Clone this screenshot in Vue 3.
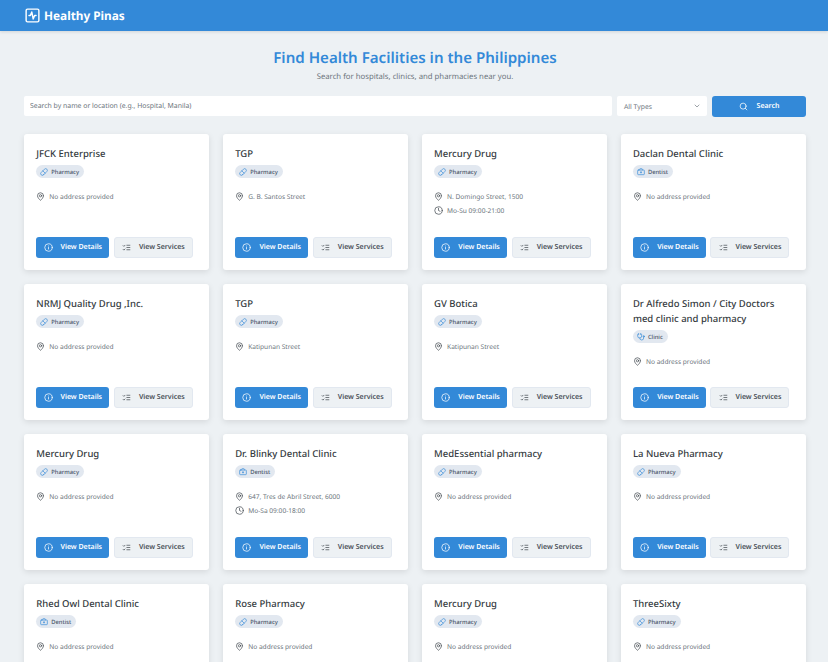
<script setup>
import { ref } from 'vue'

const facilities = ref([
  { name: 'JFCK Enterprise', type: 'Pharmacy', address: 'No address provided' },
  { name: 'TGP', type: 'Pharmacy', address: 'G. B. Santos Street' },
  { name: 'Mercury Drug', type: 'Pharmacy', address: 'N. Domingo Street, 1500', hours: 'Mo-Su 09:00-21:00' },
  { name: 'Daclan Dental Clinic', type: 'Dentist', address: 'No address provided' },
  { name: 'NRMJ Quality Drug ,Inc.', type: 'Pharmacy', address: 'No address provided' },
  { name: 'TGP', type: 'Pharmacy', address: 'Katipunan Street' },
  { name: 'GV Botica', type: 'Pharmacy', address: 'Katipunan Street' },
  { name: 'Dr Alfredo Simon / City Doctors med clinic and pharmacy', type: 'Clinic', address: 'No address provided' },
  { name: 'Mercury Drug', type: 'Pharmacy', address: 'No address provided' },
  { name: 'Dr. Blinky Dental Clinic', type: 'Dentist', address: '647, Tres de Abril Street, 6000', hours: 'Mo-Sa 09:00-18:00' },
  { name: 'MedEssential pharmacy', type: 'Pharmacy', address: 'No address provided' },
  { name: 'La Nueva Pharmacy', type: 'Pharmacy', address: 'No address provided' },
  { name: 'Rhed Owl Dental Clinic', type: 'Dentist', address: 'No address provided' },
  { name: 'Rose Pharmacy', type: 'Pharmacy', address: 'No address provided' },
  { name: 'Mercury Drug', type: 'Pharmacy', address: 'No address provided' },
  { name: 'ThreeSixty', type: 'Pharmacy', address: 'No address provided' }
])
</script>

<template>
  <div class="page">
    <header class="navbar">
      <svg class="logo" viewBox="0 0 24 24" fill="none" stroke="currentColor" stroke-width="2" stroke-linecap="round" stroke-linejoin="round">
        <rect x="3" y="3" width="18" height="18" rx="2" />
        <path d="M17 12h-2l-2 5-2-10-2 5H7" />
      </svg>
      <span class="brand">Healthy Pinas</span>
    </header>

    <main class="content">
      <h1>Find Health Facilities in the Philippines</h1>
      <p class="lead">Search for hospitals, clinics, and pharmacies near you.</p>

      <div class="search-row">
        <input class="search-input" type="text" placeholder="Search by name or location (e.g., Hospital, Manila)" />
        <div class="type-select">
          <span>All Types</span>
          <svg viewBox="0 0 24 24" fill="none" stroke="currentColor" stroke-width="2" stroke-linecap="round" stroke-linejoin="round">
            <path d="m6 9 6 6 6-6" />
          </svg>
        </div>
        <button class="search-btn">
          <svg viewBox="0 0 24 24" fill="none" stroke="currentColor" stroke-width="2" stroke-linecap="round" stroke-linejoin="round">
            <circle cx="11" cy="11" r="8" />
            <path d="m21 21-4.3-4.3" />
          </svg>
          Search
        </button>
      </div>

      <div class="grid">
        <article v-for="(f, i) in facilities" :key="i" class="card">
          <h2>{{ f.name }}</h2>
          <span class="badge">
            <svg v-if="f.type === 'Pharmacy'" viewBox="0 0 24 24" fill="none" stroke="currentColor" stroke-width="2" stroke-linecap="round" stroke-linejoin="round">
              <path d="m10.5 20.5 10-10a4.95 4.95 0 1 0-7-7l-10 10a4.95 4.95 0 1 0 7 7Z" />
              <path d="m8.5 8.5 7 7" />
            </svg>
            <svg v-else-if="f.type === 'Dentist'" viewBox="0 0 24 24" fill="none" stroke="currentColor" stroke-width="2" stroke-linecap="round" stroke-linejoin="round">
              <path d="M12 11v4M10 13h4" />
              <path d="M16 6V4a2 2 0 0 0-2-2h-4a2 2 0 0 0-2 2v2" />
              <rect x="2" y="6" width="20" height="14" rx="2" />
            </svg>
            <svg v-else viewBox="0 0 24 24" fill="none" stroke="currentColor" stroke-width="2" stroke-linecap="round" stroke-linejoin="round">
              <path d="M11 2v2M5 2v2M5 3H4a2 2 0 0 0-2 2v4a6 6 0 0 0 12 0V5a2 2 0 0 0-2-2h-1" />
              <path d="M8 15a6 6 0 0 0 12 0v-3" />
              <circle cx="20" cy="10" r="2" />
            </svg>
            {{ f.type }}
          </span>

          <div class="info">
            <div class="info-line">
              <svg viewBox="0 0 24 24" fill="none" stroke="currentColor" stroke-width="2" stroke-linecap="round" stroke-linejoin="round">
                <path d="M20 10c0 5-5.5 10.2-7.4 11.800a1 1 0 0 1-1.200 0C9.500 20.200 4 15 4 10a8 8 0 0 1 16 0" />
                <circle cx="12" cy="10" r="3" />
              </svg>
              {{ f.address }}
            </div>
            <div v-if="f.hours" class="info-line">
              <svg viewBox="0 0 24 24" fill="none" stroke="currentColor" stroke-width="2" stroke-linecap="round" stroke-linejoin="round">
                <circle cx="12" cy="12" r="10" />
                <path d="M12 6v6l4 2" />
              </svg>
              {{ f.hours }}
            </div>
          </div>

          <div class="actions">
            <button class="btn primary">
              <svg viewBox="0 0 24 24" fill="none" stroke="currentColor" stroke-width="2" stroke-linecap="round" stroke-linejoin="round">
                <circle cx="12" cy="12" r="10" />
                <path d="M12 16v-4M12 8h.01" />
              </svg>
              View Details
            </button>
            <button class="btn secondary">
              <svg viewBox="0 0 24 24" fill="none" stroke="currentColor" stroke-width="2" stroke-linecap="round" stroke-linejoin="round">
                <path d="m3 7 2 2 3-3M3 17l2 2 3-3M13 6h8M13 12h8M13 18h8" />
              </svg>
              View Services
            </button>
          </div>
        </article>
      </div>
    </main>
  </div>
</template>

<style>
html, body {
  margin: 0;
  height: 662px;
  overflow: hidden;
  background: #edf1f4;
}
</style>

<style scoped>
.page {
  font-family: "Noto Sans", "Open Sans", sans-serif;
  color: #343a40;
  text-rendering: geometricPrecision;
}
.navbar {
  height: 31px;
  box-sizing: border-box;
  padding: 0 23.500px;
  display: flex;
  align-items: center;
  gap: 3.500px;
  background: #3389d8;
  color: #fff;
  box-shadow: 0 1px 3px rgba(0, 0, 0, 0.12);
}
.logo {
  width: 17px;
  height: 17px;
}
.brand {
  font-size: 11.800px;
  font-weight: 700;
}
.content {
  padding: 19px 22px 0 24px;
}
h1 {
  margin: 0;
  text-align: center;
  font-size: 15.100px;
  line-height: 16px;
  font-weight: 600;
  color: #3389d8;
}
.lead {
  margin: 5px 0 0;
  text-align: center;
  font-size: 7.750px;
  line-height: 12px;
  color: #6c757d;
}
.search-row {
  display: flex;
  gap: 5px;
  margin-top: 13px;
}
.search-input {
  flex: 1;
  min-width: 0;
  height: 20px;
  box-sizing: border-box;
  padding: 0 6px;
  border: none;
  border-radius: 2px;
  background: #fff;
  font: 6.900px "Noto Sans", sans-serif;
  text-rendering: geometricPrecision;
  outline: none;
}
.search-input::placeholder {
  color: #6c757d;
}
.type-select {
  width: 90px;
  height: 20px;
  box-sizing: border-box;
  padding: 0 6px 0 7px;
  display: flex;
  align-items: center;
  justify-content: space-between;
  background: #fff;
  border-radius: 2px;
  font-size: 6.800px;
  color: #6c757d;
}
.type-select svg {
  width: 8px;
  height: 8px;
}
.search-btn {
  width: 94px;
  height: 21px;
  display: flex;
  align-items: center;
  justify-content: center;
  gap: 9px;
  border: none;
  border-radius: 3px;
  background: #3389d8;
  color: #fff;
  font: 600 7px "Noto Sans", sans-serif;
  text-rendering: geometricPrecision;
}
.search-btn svg {
  width: 9px;
  height: 9px;
}
.grid {
  display: grid;
  grid-template-columns: repeat(4, 1fr);
  column-gap: 13.500px;
  row-gap: 14px;
  margin-top: 17px;
}
.card {
  box-sizing: border-box;
  min-height: 136px;
  padding: 12px 12px 12px 12.300px;
  display: flex;
  flex-direction: column;
  align-items: flex-start;
  background: #fff;
  border-radius: 3px;
  box-shadow: 0 2px 6px rgba(0, 0, 0, 0.1);
}
h2 {
  margin: 0;
  font-size: 9.500px;
  line-height: 15px;
  font-weight: 500;
  color: #343a40;
}
.badge {
  margin-top: 4px;
  height: 13px;
  padding: 0 5px 0 4px;
  display: inline-flex;
  align-items: center;
  gap: 3px;
  border-radius: 7px;
  background: #e2e8f0;
  font-size: 5.800px;
  font-weight: 500;
  color: #4a5568;
}
.badge svg {
  width: 8px;
  height: 8px;
  color: #3389d8;
}
.info {
  margin-top: 13px;
  display: flex;
  flex-direction: column;
  gap: 3px;
}
.info-line {
  display: flex;
  align-items: center;
  gap: 4px;
  line-height: 11px;
  font-size: 6.600px;
  color: #6c757d;
}
.info-line svg {
  width: 9px;
  height: 9px;
  color: #495057;
}
.actions {
  margin-top: auto;
  display: flex;
  gap: 4.500px;
}
.btn {
  height: 21px;
  padding: 0;
  display: flex;
  align-items: center;
  justify-content: center;
  gap: 8px;
  border-radius: 3px;
  font: 600 7px "Noto Sans", sans-serif;
  text-rendering: geometricPrecision;
}
.btn svg {
  width: 9px;
  height: 9px;
}
.primary {
  width: 73px;
  border: none;
  background: #3389d8;
  color: #fff;
}
.secondary {
  width: 79px;
  border: 1px solid #e2e8f0;
  background: #edf1f4;
  color: #495057;
}
</style>
